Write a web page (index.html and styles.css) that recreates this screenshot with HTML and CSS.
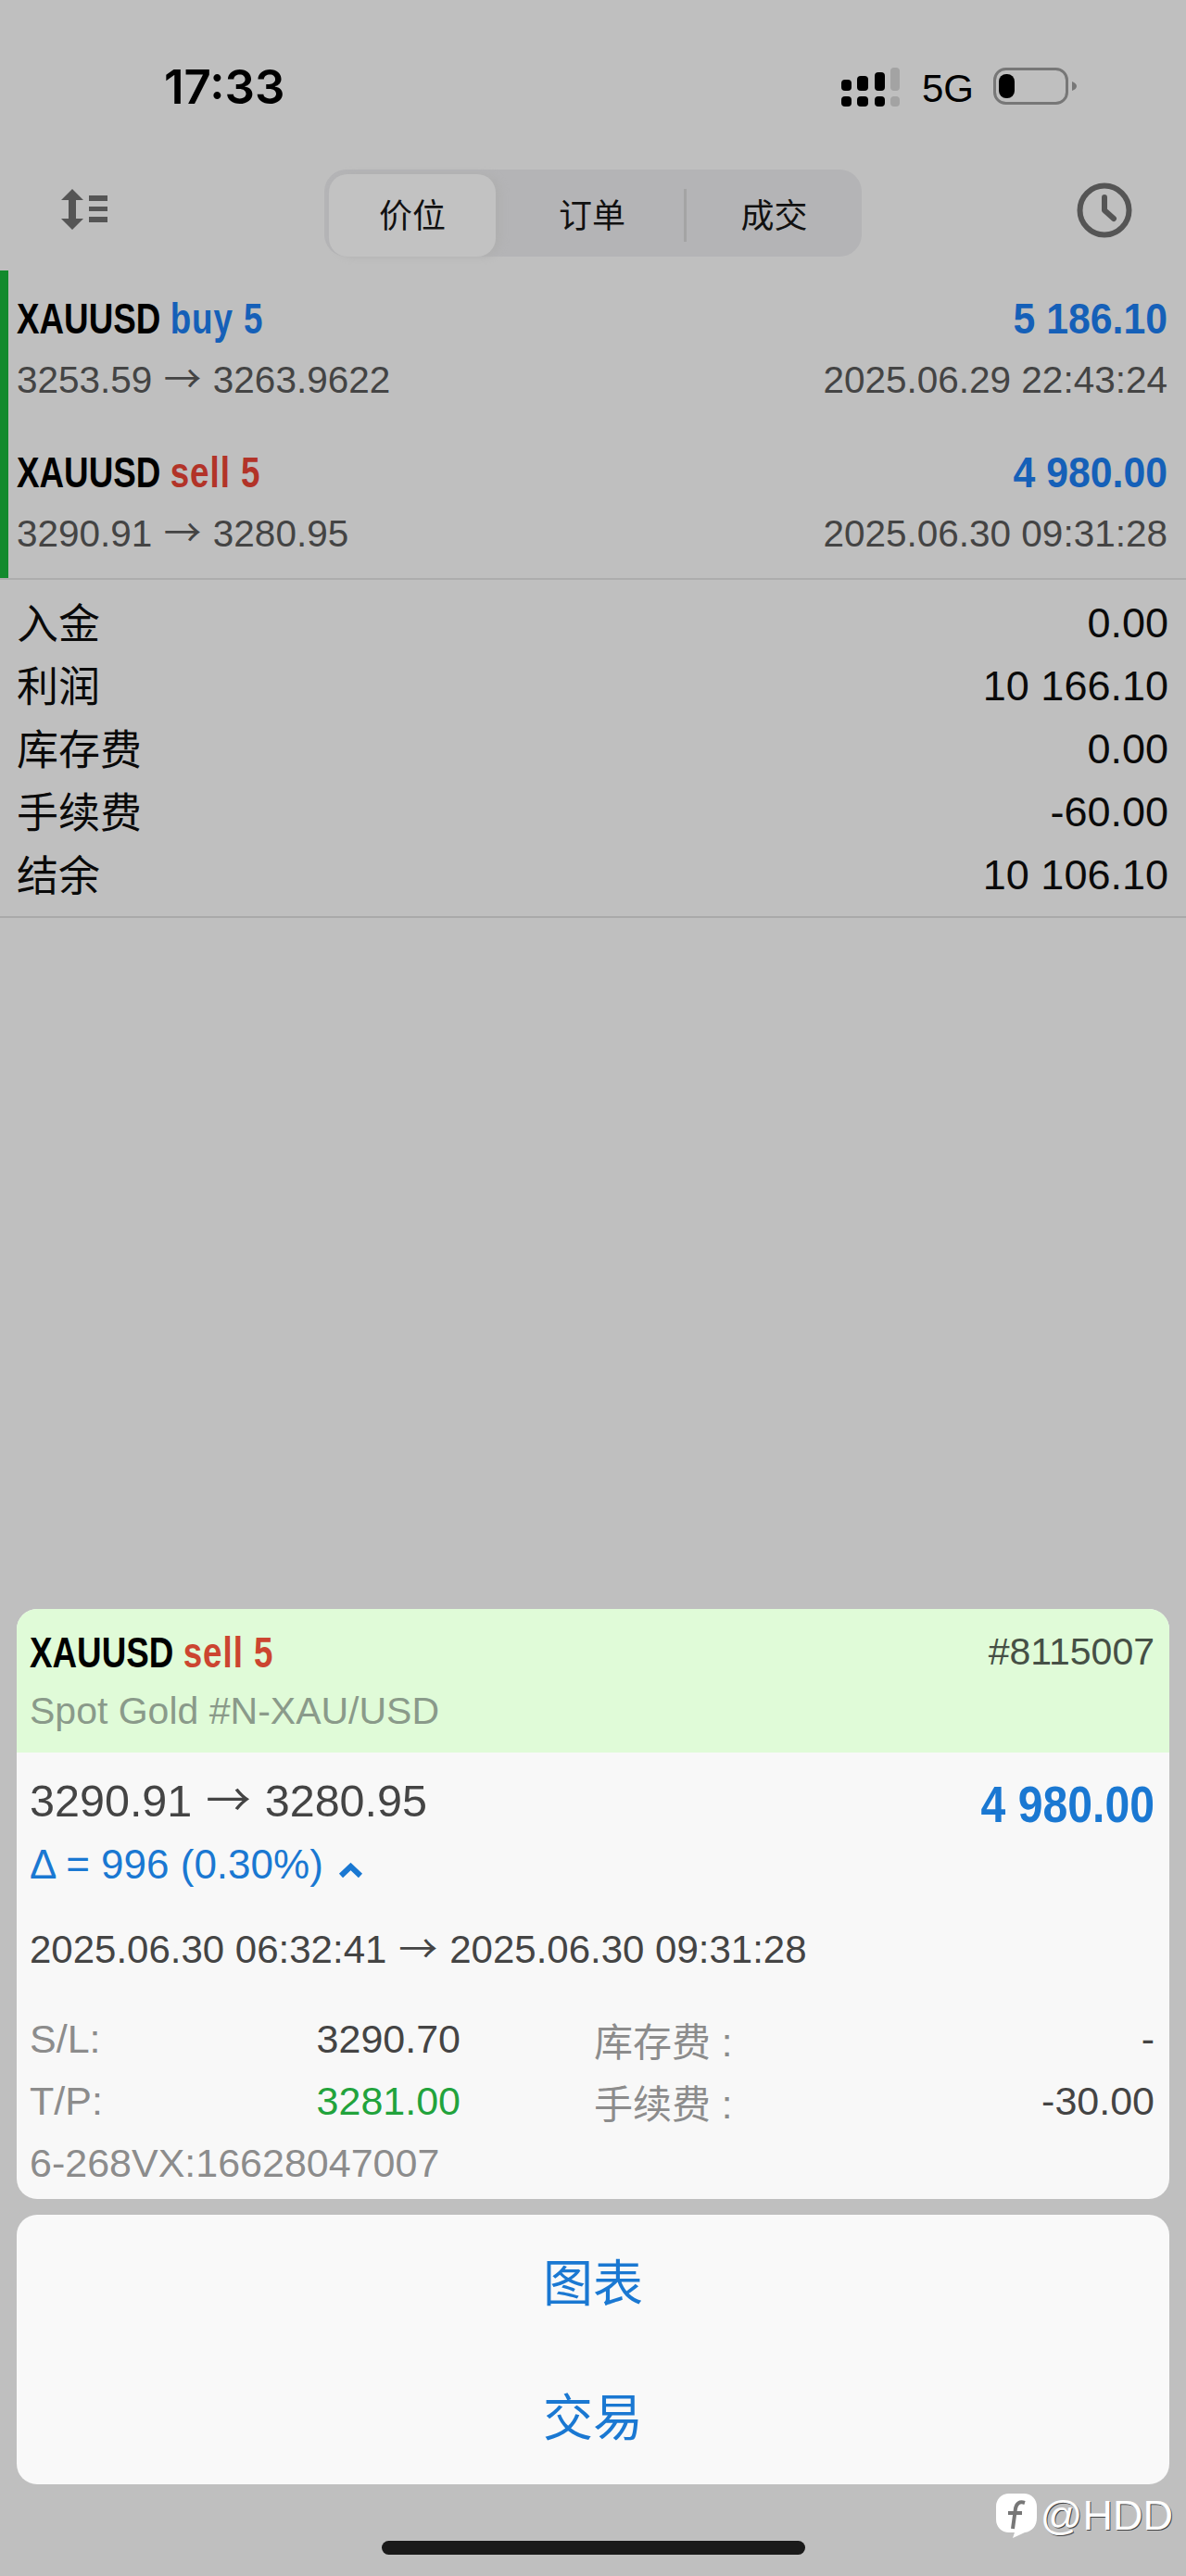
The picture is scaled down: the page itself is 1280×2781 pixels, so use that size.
FILE: index.html
```html
<!DOCTYPE html>
<html lang="zh">
	<head>
		<meta charset="utf-8">
		<title>历史</title>
		<link rel="stylesheet" href="styles.css">
	</head>
	<body>
		<!-- status bar -->
		<div class="status">
			<span class="clock">17:33</span>
			<div class="status-right">
				<svg class="signal" width="63" height="43" viewBox="0 0 63 43">
					<rect x="0" y="13" width="11" height="12" rx="4"/>
					<rect x="17" y="9" width="12" height="16" rx="4"/>
					<rect x="36" y="5" width="11" height="20" rx="4"/>
					<rect class="signal-off" x="53" y="0" width="10" height="25" rx="4"/>
					<rect x="0" y="31" width="11" height="11" rx="4"/>
					<rect x="17" y="31" width="12" height="11" rx="4"/>
					<rect x="36" y="31" width="11" height="11" rx="4"/>
					<rect class="signal-off" x="53" y="31" width="10" height="11" rx="4"/>
				</svg>
				<span class="network">5G</span>
				<svg class="battery" width="90" height="40" viewBox="0 0 90 40">
					<rect x="1.5" y="1.5" width="78" height="37" rx="12" fill="none" stroke="#777" stroke-width="3"/>
					<rect x="6" y="7" width="17" height="26" rx="8" fill="#000"/>
					<path d="M85 15c3 1 5 3 5 5s-2 4-5 5z" fill="#777"/>
				</svg>
			</div>
		</div>

		<!-- toolbar -->
		<div class="toolbar">
			<svg class="sort-icon" width="50" height="44" viewBox="0 0 50 44">
				<path d="M12 0l12 12h-8v20h8L12 44 0 32h8V12H0z" fill="#555"/>
				<rect x="30" y="7" width="20" height="6" fill="#555"/>
				<rect x="30" y="19" width="20" height="5" fill="#555"/>
				<rect x="30" y="30" width="20" height="6" fill="#555"/>
			</svg>
			<div class="tabs">
				<div class="tab tab-active">价位</div>
				<div class="tab">订单</div>
				<div class="tab tab-last">成交</div>
			</div>
			<svg class="clock-icon" width="60" height="60" viewBox="0 0 60 60">
				<circle cx="30" cy="30" r="26.5" fill="none" stroke="#555" stroke-width="6"/>
				<path d="M30 16v14l10 9" fill="none" stroke="#555" stroke-width="6" stroke-linecap="round" stroke-linejoin="round"/>
			</svg>
		</div>

		<!-- closed orders -->
		<div class="trades">
			<div class="trade">
				<div class="trade-line">
					<span class="title">XAUUSD <span class="buy">buy 5</span></span>
					<span class="amount">5 186.10</span>
				</div>
				<div class="trade-line sub">
					<span>3253.59 <span class="arrow">→</span> 3263.9622</span>
					<span>2025.06.29 22:43:24</span>
				</div>
			</div>
			<div class="trade">
				<div class="trade-line">
					<span class="title">XAUUSD <span class="sell">sell 5</span></span>
					<span class="amount">4 980.00</span>
				</div>
				<div class="trade-line sub">
					<span>3290.91 <span class="arrow">→</span> 3280.95</span>
					<span>2025.06.30 09:31:28</span>
				</div>
			</div>
		</div>

		<div class="summary">
			<div class="summary-row"><span class="summary-name">入金</span><span>0.00</span></div>
			<div class="summary-row"><span class="summary-name">利润</span><span>10 166.10</span></div>
			<div class="summary-row"><span class="summary-name">库存费</span><span>0.00</span></div>
			<div class="summary-row"><span class="summary-name">手续费</span><span>-60.00</span></div>
			<div class="summary-row"><span class="summary-name">结余</span><span>10 106.10</span></div>
		</div>

		<!-- bottom sheet -->
		<div class="sheet">
			<div class="card">
				<div class="card-head">
					<div>
						<div class="title head-title">XAUUSD <span class="sell-light">sell 5</span></div>
						<div class="symbol">Spot Gold #N-XAU/USD</div>
					</div>
					<div class="ticket">#8115007</div>
				</div>
				<div class="card-body">
					<div class="price-line">
						<div>
							<div class="prices">3290.91 <span class="arrow">→</span> 3280.95</div>
							<div class="delta">Δ = 996 (0.30%)
								<svg class="chevron" width="27" height="17" viewBox="0 0 27 17">
									<path d="M3 14L13.5 4 24 14" fill="none" stroke="#1a78d2" stroke-width="6"/>
								</svg>
							</div>
						</div>
						<div class="big-amount">4 980.00</div>
					</div>
					<div class="dates">2025.06.30 06:32:41 <span class="arrow">→</span> 2025.06.30 09:31:28</div>
					<div class="stats">
						<span class="label">S/L:</span><span class="value">3290.70</span>
						<span class="label label-right">库存费 :</span><span class="value">-</span>
						<span class="label">T/P:</span><span class="value tp">3281.00</span>
						<span class="label label-right">手续费 :</span><span class="value">-30.00</span>
					</div>
					<div class="label comment">6-268VX:16628047007</div>
				</div>
			</div>
			<div class="actions">
				<div class="action">图表</div>
				<div class="action">交易</div>
			</div>
		</div>

		<div class="footer">
			<div class="home-bar"></div>
		</div>

		<div class="watermark">
			<svg width="44" height="48" viewBox="0 0 44 48">
				<path d="M14 0h16c8 0 14 6 14 14v12c0 9-5 15-13 16l-13 6 2-6h-6C6 42 0 36 0 28V14C0 6 6 0 14 0z" fill="#fff"/>
				<path d="M31 10c-6-2-9 1-10 6l-3 22M13 21h15" fill="none" stroke="#777" stroke-width="4"/>
			</svg>
			<span>@HDD</span>
		</div>
	</body>
</html>
```
FILE: styles.css
```css
* {
	box-sizing: border-box;
}

body {
	position: relative;
	display: flex;
	flex-direction: column;
	width: 1280px;
	height: 2781px;
	margin: 0;
	overflow: hidden;
	background: #bfbfbf;
	color: #000;
	font-family: "Liberation Sans", "Noto Sans CJK SC", sans-serif;
}

.arrow {
	margin: 0 .03em;
	font-family: "Noto Sans CJK SC", sans-serif;
	line-height: 0;
}

/* status bar */
.status {
	display: flex;
	justify-content: space-between;
	height: 183px;
	padding: 64px 118px 0 177px;
}
.clock {
	font: 600 51px/60px Inter, sans-serif;
}
.status-right {
	display: flex;
	align-items: flex-start;
	height: 43px;
	margin-top: 9px;
}
.signal {
	fill: #000;
}
.signal-off {
	fill: #a3a3a3;
}
.network {
	margin-left: 24px;
	font-size: 42px;
	line-height: 46px;
}
.battery {
	margin-left: 21px;
}

/* toolbar */
.toolbar {
	display: flex;
	align-items: center;
	height: 94px;
	margin-bottom: 15px;
	padding: 0 58px 0 66px;
}
.sort-icon {
	margin-top: -8px;
}
.clock-icon {
	margin-top: -6px;
}
.tabs {
	display: grid;
	grid-template-columns: 185px 198px 192px;
	width: 580px;
	height: 94px;
	margin: 0 auto 0 234px;
	padding: 5px 0 5px 5px;
	border-radius: 24px;
	background: #b4b4b6;
}
.tab {
	display: flex;
	align-items: center;
	justify-content: center;
	padding-bottom: 5px;
	font-size: 36px;
	color: #111;
}
.tab-active {
	width: 180px;
	border-radius: 20px;
	background: #c2c2c2;
	box-shadow: 6px 0 8px #b0b0b0;
}
.tab-last {
	border-left: 3px solid #a4a4a4;
	margin: 16px 0;
}

/* closed orders */
.trades {
	border-left: 9px solid #128a2d;
}
.trade {
	height: 166px;
	padding: 22px 20px 0 9px;
}
.trade-line {
	display: flex;
	justify-content: space-between;
	line-height: 60px;
}
/* the app's titles are a condensed face, none is installed */
.title {
	font-size: 46px;
	font-weight: 700;
	transform: scaleX(.8);
	transform-origin: left;
}
.buy, .amount {
	color: #1560b8;
}
.sell {
	color: #b23328;
}
.buy, .sell, .sell-light {
	letter-spacing: 1.2px;
}
.amount {
	font-size: 46px;
	font-weight: 700;
	transform: scaleX(.93);
	transform-origin: right;
}
.sub {
	margin-top: 8px;
	font-size: 40.5px;
	line-height: 56px;
	color: #444;
}

/* totals */
.summary {
	height: 367px;
	padding: 13px 19px 0 18px;
	border-top: 2px solid #adadad;
	border-bottom: 2px solid #a9a9a9;
}
.summary-row {
	display: flex;
	justify-content: space-between;
	align-items: center;
	height: 68px;
	font-size: 45px;
	color: #0a0a0a;
}
.summary-name {
	margin-bottom: 6px;
}

/* bottom sheet */
.sheet {
	display: flex;
	flex-direction: column;
	gap: 17px;
	margin: auto 18px 0;
}
.card {
	height: 637px;
	border-radius: 22px;
	overflow: hidden;
	background: #f8f8f8;
}
.card-head {
	display: flex;
	justify-content: space-between;
	height: 155px;
	padding: 17px 16px 0 14px;
	background: #e0fbd8;
}
.head-title {
	line-height: 60px;
}
.sell-light {
	color: #cc4530;
}
.symbol {
	margin-top: 8px;
	font-size: 41px;
	line-height: 50px;
	color: #8a9a8a;
}
.ticket {
	margin-top: 4px;
	font-size: 41px;
	line-height: 50px;
	color: #465046;
}
.card-body {
	padding: 24px 16px 0 14px;
}
.price-line {
	display: flex;
	justify-content: space-between;
}
.prices {
	font-size: 48.5px;
	line-height: 56px;
	color: #444;
}
.delta {
	margin-top: 15px;
	font-size: 44px;
	line-height: 52px;
	color: #1a78d2;
}
.chevron {
	margin-left: 4px;
}
.big-amount {
	font-size: 56px;
	font-weight: 700;
	line-height: 64px;
	color: #1a78d2;
	transform: scaleX(.86);
	transform-origin: right;
}
.dates {
	margin-top: 41px;
	font-size: 42px;
	line-height: 50px;
	color: #444;
}
.stats {
	display: grid;
	grid-template-columns: 150px 315px 300px 1fr;
	grid-auto-rows: 67px;
	align-items: center;
	margin-top: 38px;
	font-size: 43px;
}
.value {
	text-align: right;
	color: #444;
}
.label {
	color: #8c8c8c;
}
.label-right {
	margin-left: 144px;
	font-size: 42px;
	white-space: nowrap;
}
.value.tp {
	color: #22a33c;
}
.comment {
	font-size: 43px;
	line-height: 66px;
}
.actions {
	height: 291px;
	padding-top: 1px;
	border-radius: 22px;
	background: #f9f9f9;
}
.action {
	display: flex;
	align-items: center;
	justify-content: center;
	height: 145px;
	padding-bottom: 6px;
	font-size: 54px;
	color: #1a78d2;
}

/* home indicator */
.footer {
	display: flex;
	justify-content: center;
	height: 99px;
	padding-top: 61px;
}
.home-bar {
	width: 457px;
	height: 15px;
	border-radius: 8px;
	background: #1a1a1a;
}

/* sits over the corner of the screenshot */
.watermark {
	position: absolute;
	right: 14px;
	bottom: 41px;
	display: flex;
	align-items: center;
	gap: 4px;
	font-size: 45px;
	line-height: 48px;
	color: #fff;
	text-shadow: 1px 1px 0 #444;
}
```
